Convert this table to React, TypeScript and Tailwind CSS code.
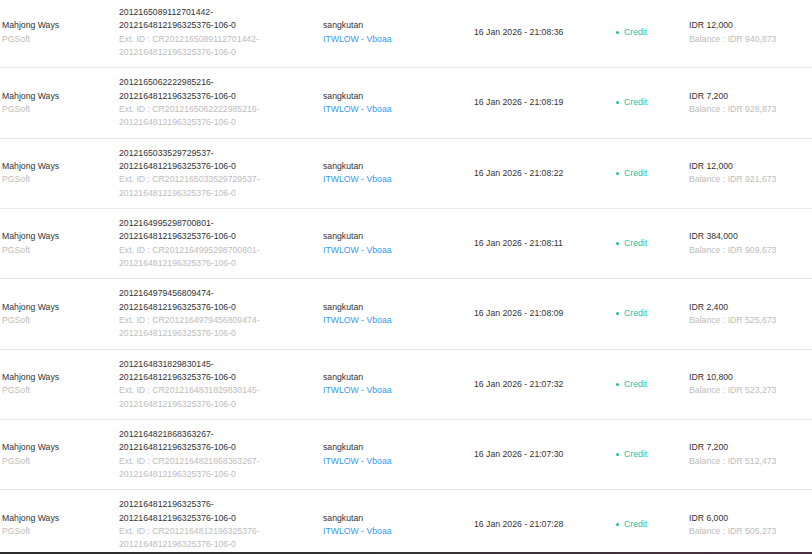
const ROWS = [
  { id: "2012165089112701442", time: "21:08:36", amount: "12,000", balance: "940,873" },
  { id: "2012165062222985216", time: "21:08:19", amount: "7,200", balance: "928,873" },
  { id: "2012165033529729537", time: "21:08:22", amount: "12,000", balance: "921,673" },
  { id: "2012164995298700801", time: "21:08:11", amount: "384,000", balance: "909,673" },
  { id: "2012164979456809474", time: "21:08:09", amount: "2,400", balance: "525,673" },
  { id: "2012164831829830145", time: "21:07:32", amount: "10,800", balance: "523,273" },
  { id: "2012164821868363267", time: "21:07:30", amount: "7,200", balance: "512,473" },
  { id: "2012164812196325376", time: "21:07:28", amount: "6,000", balance: "505,273" },
];

const ROUND = "2012164812196325376-106-0";

function TxRow({ row }: { row: (typeof ROWS)[number] }) {
  return (
    <div className="grid grid-cols-[117px_204px_151px_142px_73px_1fr] items-center border-b border-[#e8e8e8] py-2">
      <div className="pl-[2px]">
        <div className="text-[#333]">Mahjong Ways</div>
        <div className="text-[#bdbdbd]">PGSoft</div>
      </div>
      <div className="pl-[2px]">
        <div className="text-[#333]">{row.id}-</div>
        <div className="text-[#333]">{ROUND}</div>
        <div className="text-[#bdbdbd]">Ext. ID : CR{row.id}-</div>
        <div className="text-[#bdbdbd]">{ROUND}</div>
      </div>
      <div className="pl-[2px]">
        <div className="text-[#333]">sangkutan</div>
        <div className="text-[#3a97f5]">ITWLOW - Vboaa</div>
      </div>
      <div className="pl-[2px] text-[#333]">16 Jan 2026 - {row.time}</div>
      <div className="flex items-center gap-[5px] pl-[2px] text-[#1fbf9f]">
        <span className="h-[3px] w-[3px] rounded-full bg-[#1fbf9f]" />
        Credit
      </div>
      <div className="pl-[2px]">
        <div className="text-[#333]">IDR {row.amount}</div>
        <div className="text-[#bdbdbd]">Balance : IDR {row.balance}</div>
      </div>
    </div>
  );
}

export default function App() {
  return (
    <div
      className="flex h-[554px] w-[812px] flex-col overflow-hidden bg-white text-[8.7px] leading-[13.33px]"
      style={{ fontFamily: '"Liberation Sans", Arial, sans-serif' }}
    >
      <div className="flex-1 overflow-hidden">
        <div className="-mt-[2px]">
          {ROWS.map((row) => (
            <TxRow key={row.id} row={row} />
          ))}
        </div>
      </div>
      <div className="h-[2px] bg-gradient-to-r from-[#2b2b2b] via-[#333] to-[#4a2f40]" />
    </div>
  );
}
